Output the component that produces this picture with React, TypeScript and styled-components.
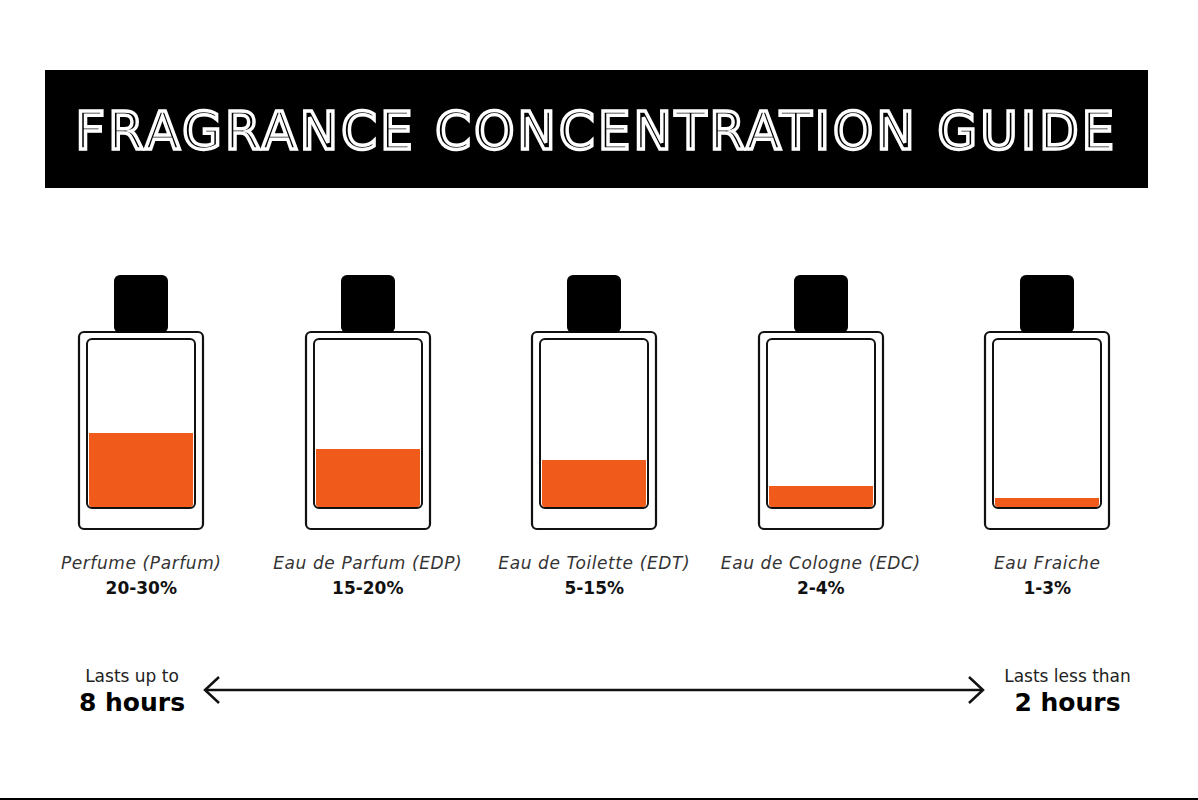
import React from "react";
import styled, { createGlobalStyle } from "styled-components";

const GlobalStyle = createGlobalStyle`
  html, body {
    margin: 0;
    padding: 0;
    background: #fff;
  }
  body {
    font-family: "DejaVu Sans", "Liberation Sans", sans-serif;
    color: #111;
  }
`;

const Page = styled.div`
  width: 1198px;
  height: 800px;
  box-sizing: border-box;
  padding-top: 70px;
  border-bottom: 2px solid #000;
  overflow: hidden;
`;

const Banner = styled.header`
  margin-left: 45px;
  width: 1103px;
  height: 118px;
  box-sizing: border-box;
  padding-top: 5px;
  background: #000;
  display: flex;
  align-items: center;
  justify-content: center;
`;

const Title = styled.h1`
  margin: 0;
  font-family: "DejaVu Sans", sans-serif;
  font-weight: 400;
  font-size: 51px;
  line-height: 1;
  letter-spacing: 3.3px;
  color: #000;
  -webkit-text-stroke: 3.4px #fff;
  white-space: nowrap;
`;

const BottleRow = styled.section`
  margin-top: 85px;
  padding-left: 28px;
  display: grid;
  grid-template-columns: repeat(5, 226.5px);
`;

const BottleCard = styled.div`
  display: flex;
  flex-direction: column;
  align-items: center;
`;

const BottleSvg = styled.svg`
  display: block;
`;

const Name = styled.div`
  margin-top: 21px;
  font-size: 17px;
  line-height: 22px;
  font-style: italic;
  color: #333;
  letter-spacing: 0.6px;
  white-space: nowrap;
`;

const Percent = styled.div`
  margin-top: 3px;
  font-size: 17px;
  line-height: 22px;
  font-weight: 700;
  color: #111;
`;

const DurationRow = styled.section`
  margin-top: 67px;
  padding-left: 62px;
  display: grid;
  grid-template-columns: 140px 784px 163px;
  align-items: start;
`;

const DurationBlock = styled.div`
  display: flex;
  flex-direction: column;
  align-items: center;
  white-space: nowrap;
`;

const DurationNote = styled.div`
  font-size: 17px;
  line-height: 20px;
  color: #222;
`;

const DurationValue = styled.div`
  margin-top: 3px;
  font-size: 25px;
  line-height: 28px;
  font-weight: 700;
  color: #000;
`;

const ArrowSvg = styled.svg`
  display: block;
  margin-top: 10px;
`;

const ORANGE = "#f05a1b";

const bottles = [
  { name: "Perfume (Parfum)", pct: "20-30%", top: 160 },
  { name: "Eau de Parfum (EDP)", pct: "15-20%", top: 176 },
  { name: "Eau de Toilette (EDT)", pct: "5-15%", top: 187 },
  { name: "Eau de Cologne (EDC)", pct: "2-4%", top: 213 },
  { name: "Eau Fraiche", pct: "1-3%", top: 225 },
];

function Bottle({ top }: { top: number }) {
  return (
    <BottleSvg width="130" height="258" viewBox="0 0 130 258">
      {/* glass */}
      <rect x="3" y="59" width="124" height="197" rx="5" fill="#fff" stroke="#111" strokeWidth="2.2" />
      <path
        d={`M13 ${top} H117 V231 Q117 234 114 234 H16 Q13 234 13 231 Z`}
        fill={ORANGE}
      />
      <rect x="11" y="66" width="108" height="169" rx="5" fill="none" stroke="#111" strokeWidth="2" />
      {/* cap */}
      <rect x="38" y="2" width="54" height="58" rx="6" fill="#000" />
    </BottleSvg>
  );
}

function Arrow() {
  return (
    <ArrowSvg width="784" height="28" viewBox="0 0 784 28">
      <line x1="3" y1="14" x2="781" y2="14" stroke="#111" strokeWidth="2.5" />
      <polyline points="17,1 3,14 17,27" fill="none" stroke="#111" strokeWidth="2.5" />
      <polyline points="767,1 781,14 767,27" fill="none" stroke="#111" strokeWidth="2.5" />
    </ArrowSvg>
  );
}

export default function App() {
  return (
    <>
      <GlobalStyle />
      <Page>
        <Banner>
          <Title>FRAGRANCE CONCENTRATION GUIDE</Title>
        </Banner>

        <BottleRow>
          {bottles.map((b) => (
            <BottleCard key={b.name}>
              <Bottle top={b.top} />
              <Name>{b.name}</Name>
              <Percent>{b.pct}</Percent>
            </BottleCard>
          ))}
        </BottleRow>

        <DurationRow>
          <DurationBlock>
            <DurationNote>Lasts up to</DurationNote>
            <DurationValue>8 hours</DurationValue>
          </DurationBlock>
          <Arrow />
          <DurationBlock>
            <DurationNote>Lasts less than</DurationNote>
            <DurationValue>2 hours</DurationValue>
          </DurationBlock>
        </DurationRow>
      </Page>
    </>
  );
}
